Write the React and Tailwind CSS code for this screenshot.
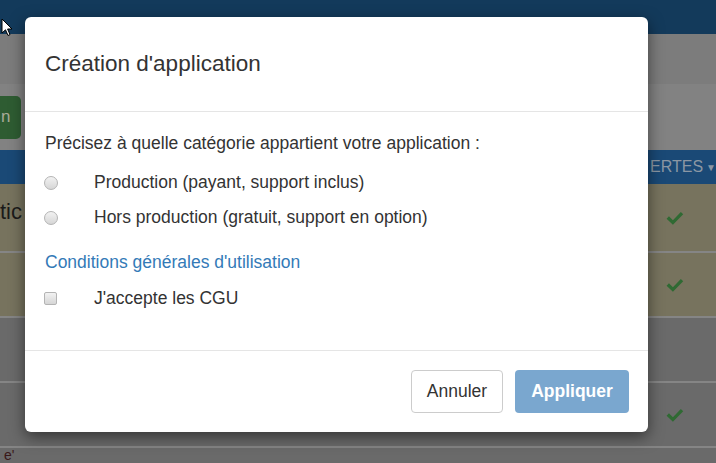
import React from 'react'

function Check() {
  return (
    <svg className="w-[19px] h-[19px] text-[#2f6a33]" viewBox="0 0 24 24" fill="currentColor">
      <path d="M2 13.5l3-3 5 5L20 5l3 3-13 13z" />
    </svg>
  )
}

function Radio() {
  return (
    <div className="w-[14px] h-[14px] rounded-full border border-[#b4b4b4] bg-gradient-to-b from-[#f2f2f2] to-[#d6d6d6]"></div>
  )
}

function Row({ color, children, check, h }) {
  return (
    <div className={`${h} ${color} border-b-2 border-[#858585] flex items-center justify-between`}>
      <div>{children}</div>
      {check && <div className="mr-[32px]"><Check /></div>}
    </div>
  )
}

export default function App() {
  return (
    <div className="relative w-[716px] h-[463px] overflow-hidden bg-[#6a6a6a] font-['Liberation_Sans',Arial,sans-serif]">
      {/* page behind the backdrop */}
      <div className="h-[34px] bg-[#133a5b]"></div>
      <div className="h-[50px] bg-[#7c7c7c]"></div>
      <div className="h-[66px] bg-[#828282] flex items-center">
        <div className="h-[43px] w-[21px] bg-[#2e5c32] rounded-r-[5px] flex items-center text-[17px] text-[#a9ab98] pl-[1px]">n</div>
      </div>
      <div className="h-[34px] bg-[#1a4976] flex items-center pl-[650px] whitespace-nowrap text-[16px] text-[#8b97a4]">
        <span>ERTES</span>
        <span className="ml-[3px] text-[10px]">▼</span>
      </div>
      <Row h="h-[69px]" color="bg-[#77735e]" check>
        <span className="text-[22px] text-[#1b1b1a] relative top-[-6px]">tic</span>
      </Row>
      <Row h="h-[65px]" color="bg-[#77735e]" check />
      <Row h="h-[65px]" color="bg-[#6a6a6a]" />
      <Row h="h-[65px]" color="bg-[#6a6a6a]" check />
      <div className="h-[15px] bg-[#6a6a6a] text-[14px] text-[#3a1818] pl-[4px] leading-[15px]">e'</div>

      {/* mouse cursor */}
      <svg className="absolute left-[1px] top-[18px] w-[13px] h-[19px]" viewBox="0 0 13 19">
        <path d="M1 1 L1 15 L4.5 11.8 L7 17.5 L9 16.6 L6.6 11 L11 11 Z" fill="#fff" stroke="#000" strokeWidth="1" />
      </svg>

      {/* modal */}
      <div className="absolute left-[25px] top-[17px] w-[623px] h-[415px] bg-white rounded-[6px] shadow-[0_5px_15px_rgba(0,0,0,0.5)] text-[#333]">
        <div className="h-[95px] border-b border-[#e5e5e5] flex items-center px-5">
          <h4 className="text-[22.5px] leading-7 text-[#333]">Création d'application</h4>
        </div>
        <div className="h-[238px] px-5 pt-[19px] text-[17.5px]">
          <p className="leading-6">Précisez à quelle catégorie appartient votre application :</p>
          <div className="mt-[10px] h-[35px] flex items-center">
            <div className="w-[50px] -ml-px"><Radio /></div>
            <span>Production (payant, support inclus)</span>
          </div>
          <div className="h-[35px] flex items-center">
            <div className="w-[50px] -ml-px"><Radio /></div>
            <span>Hors production (gratuit, support en option)</span>
          </div>
          <p className="mt-[15px] leading-6 text-[#337ab7]">Conditions générales d'utilisation</p>
          <div className="mt-[7px] h-[35px] flex items-center">
            <div className="w-[50px] -ml-px">
              <div className="w-[13px] h-[13px] rounded-[2px] border border-[#b4b4b4] bg-gradient-to-b from-[#f2f2f2] to-[#d6d6d6]"></div>
            </div>
            <span>J'accepte les CGU</span>
          </div>
        </div>
        <div className="h-[82px] border-t border-[#e5e5e5] flex items-center justify-end gap-3 pl-5 pr-[19px]">
          <button className="h-[43px] w-[92px] border border-[#ccc] rounded-[4px] bg-white text-[17.5px] text-[#333]">Annuler</button>
          <button className="h-[43px] w-[114px] rounded-[4px] bg-[#7aa7cf] text-[17.5px] font-bold text-white">Appliquer</button>
        </div>
      </div>
    </div>
  )
}
